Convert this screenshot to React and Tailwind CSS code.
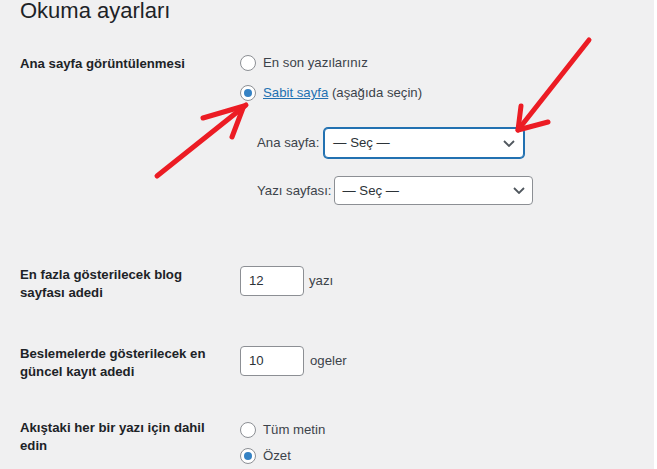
export default function App() {
  const Radio = ({ checked }) => (
    <span className="w-4 h-4 rounded-full border border-[#8c8f94] bg-white flex items-center justify-center shrink-0">
      {checked && <span className="w-2 h-2 rounded-full bg-[#3582c4]" />}
    </span>
  );
  const Chevron = () => (
    <svg width="12" height="7" viewBox="0 0 12 7" className="shrink-0">
      <polyline points="1,1 6,6 11,1" fill="none" stroke="#50575e" strokeWidth="1.8" />
    </svg>
  );
  return (
    <div className="w-[657px] h-[469px] bg-white flex overflow-hidden font-['Liberation_Sans',sans-serif]">
      <div className="relative w-[654px] h-full bg-[#f0f0f1] pl-[20px]">
        <h1 className="text-[22px] leading-[22px] font-normal text-[#1d2327] whitespace-nowrap">Okuma ayarları</h1>

        {/* Row 1 */}
        <div className="flex mt-[33px]">
          <div className="w-[220px] shrink-0 text-[13.2px] leading-[18px] font-semibold text-[#1d2327]">Ana sayfa görüntülenmesi</div>
          <div className="flex flex-col text-[13.2px] text-[#3c434a]">
            <div className="flex items-center gap-[7px] h-4">
              <Radio />
              <span className="whitespace-nowrap">En son yazılarınız</span>
            </div>
            <div className="flex items-center gap-[7px] h-4 mt-[14px]">
              <Radio checked />
              <span className="whitespace-nowrap"><span className="text-[#2271b1] underline">Sabit sayfa</span> (aşağıda seçin)</span>
            </div>
            <div className="flex items-center mt-[27px] pl-[17px] whitespace-nowrap">
              <span className="mr-[5px]">Ana sayfa:</span>
              <div className="w-[200px] h-[30px] bg-white border border-[#2271b1] shadow-[0_0_0_1px_#2271b1] rounded-[4px] flex items-center justify-between pl-[8px] pr-[8px] text-[#2c3338]">
                <span>— Seç —</span>
                <Chevron />
              </div>
            </div>
            <div className="flex items-center mt-[18px] pl-[17px] whitespace-nowrap">
              <span className="mr-[2px]">Yazı sayfası:</span>
              <div className="w-[199px] h-[29px] bg-white border border-[#8c8f94] rounded-[4px] flex items-center justify-between pl-[8px] pr-[7px] text-[#2c3338]">
                <span>— Seç —</span>
                <Chevron />
              </div>
            </div>
          </div>
        </div>

        {/* Row 2 */}
        <div className="flex mt-[61px]">
          <div className="w-[220px] shrink-0 text-[13.2px] leading-[18px] font-semibold text-[#1d2327] pr-[30px]">En fazla gösterilecek blog sayfası adedi</div>
          <div className="flex items-center h-[30px] text-[13.2px] text-[#3c434a]">
            <div className="w-[64px] h-[30px] bg-white border border-[#8c8f94] rounded-[4px] flex items-center px-[8px] text-[#2c3338]">12</div>
            <span className="ml-[5px]">yazı</span>
          </div>
        </div>

        {/* Row 3 */}
        <div className="flex mt-[43px]">
          <div className="w-[220px] shrink-0 text-[13.2px] leading-[18px] font-semibold text-[#1d2327] pr-[20px]">Beslemelerde gösterilecek en güncel kayıt adedi</div>
          <div className="flex items-center h-[30px] mt-[1px] text-[13.2px] text-[#3c434a]">
            <div className="w-[64px] h-[30px] bg-white border border-[#8c8f94] rounded-[4px] flex items-center px-[8px] text-[#2c3338]">10</div>
            <span className="ml-[6px]">ogeler</span>
          </div>
        </div>

        {/* Row 4 */}
        <div className="flex mt-[38px]">
          <div className="w-[220px] shrink-0 text-[13.2px] leading-[18px] font-semibold text-[#1d2327] pr-[20px]">Akıştaki her bir yazı için dahil edin</div>
          <div className="flex flex-col text-[13.2px] text-[#3c434a] mt-[3px]">
            <div className="flex items-center gap-[7px] h-4">
              <Radio />
              <span>Tüm metin</span>
            </div>
            <div className="flex items-center gap-[7px] h-4 mt-[10px]">
              <Radio checked />
              <span>Özet</span>
            </div>
          </div>
        </div>

        <svg className="absolute left-0 top-0 pointer-events-none" width="654" height="469" viewBox="0 0 654 469">
          <g fill="none" stroke="#ec1c24" strokeWidth="5" strokeLinecap="round" strokeLinejoin="round">
            <path d="M157 176 L246 105" />
            <path d="M203 118 L244 106" />
            <path d="M232 137 L243 108" />
            <path d="M589 40 L518 130" />
            <path d="M521 106 L518 130 L548 122" />
          </g>
        </svg>
      </div>
    </div>
  );
}
